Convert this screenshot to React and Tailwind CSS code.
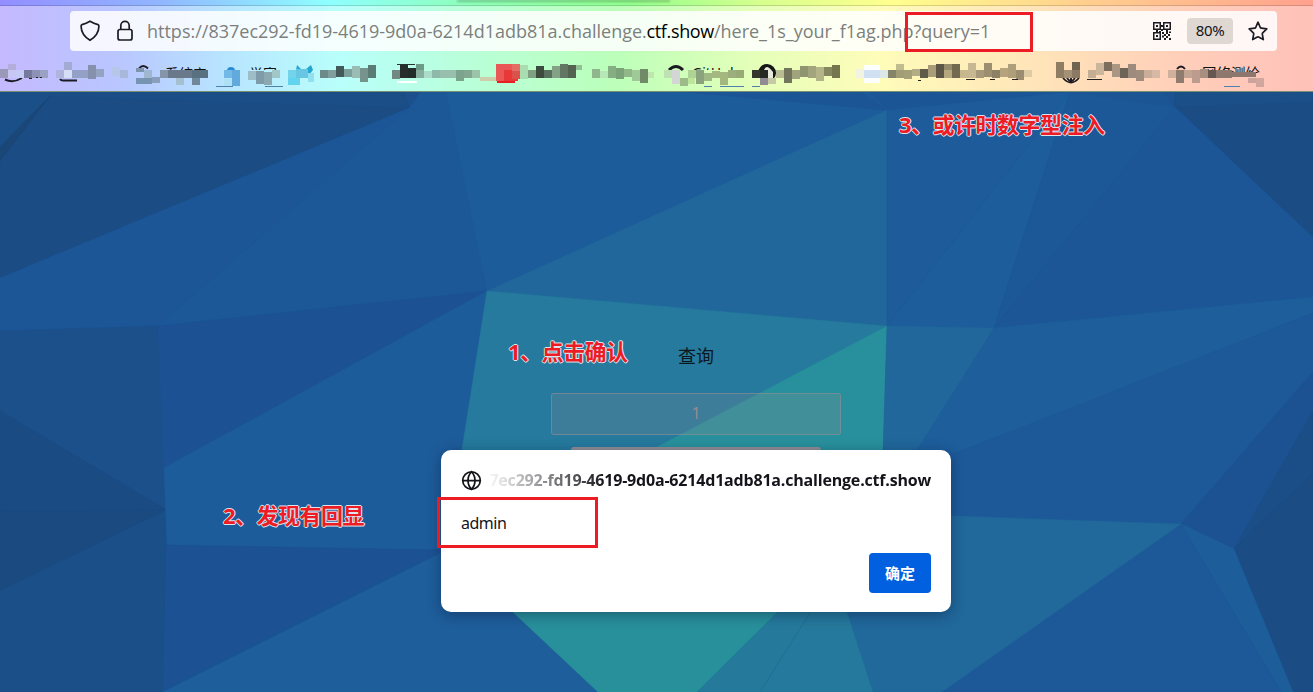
import React from "react";
import { Globe } from "lucide-react";

const FACETS = [
  ["0,92 404,92 409,108 0,278", "#1b4c83"],
  ["0,92 50,92 50,96 0,148", "#1b4f88"],
  ["50,96 0,147 0,161", "#1b4778"],
  ["50,92 404,92 409,108 50,96", "#1b4e86"],
  ["404,92 421,92 409,108", "#1c4f8b"],
  ["0,278 409,108 158,326 0,331", "#1c5697"],
  ["409,108 421,92 446,92 487,291 158,326", "#1c5898"],
  ["446,92 687,92 887,110 487,291", "#1d5c9a"],
  ["687,92 1070,92 887,110", "#1c5596"],
  ["862,92 870,92 887,110", "#1d5998"],
  ["487,291 887,110 887,326", "#21679b"],
  ["0,331 158,326 167,510 0,411", "#1c508b"],
  ["0,411 167,510 0,511", "#1b4b83"],
  ["0,511 167,510 0,591", "#1b4a81"],
  ["0,591 167,510 163,692 0,692", "#1b4f88"],
  ["158,326 487,291 164,468", "#1c5294"],
  ["164,468 487,291 462,450 441,550 167,545", "#1d5c9a"],
  ["167,545 441,550 441,553 163,692", "#1c5293"],
  ["163,692 441,553 512,612 598,692", "#1e5e9b"],
  ["487,291 887,326 640,456 461,456", "#257a9d"],
  ["887,326 883,460 632,460", "#28909c"],
  ["887,110 1070,92 887,326", "#1d5b9a"],
  ["887,326 1070,92 994,328", "#1d5d9b"],
  ["1070,92 1175,107 994,328", "#1c5898"],
  ["1070,92 1164,92 1175,107", "#1c5594"],
  ["1164,92 1176,92 1175,107", "#1c528f"],
  ["1176,92 1313,92 1313,237 1175,107", "#1b4c84"],
  ["1176,92 1313,92 1313,102 1175,107", "#1b4f88"],
  ["1175,107 1313,238 1313,297 994,328", "#1c5697"],
  ["887,326 994,328 917,452 883,452", "#21679b"],
  ["994,328 1313,297 1313,313 956,453 917,450", "#1d5e9b"],
  ["956,453 1313,313 1313,372 1181,524 940,516", "#1d5999"],
  ["1313,372 1313,411 1234,549 1181,524", "#1c5292"],
  ["1313,411 1313,473 1234,549", "#1b4e87"],
  ["1313,473 1313,692 1293,692 1234,549", "#1b4c84"],
  ["1181,524 1234,549 1293,692 1281,692", "#1d5d9a"],
  ["1181,524 1281,692 942,692", "#1d5899"],
  ["900,514 956,516 1181,524 942,692 873,692 840,590", "#21689b"],
  ["500,600 790,600 697,692 598,692", "#28909b"],
  ["790,600 818,600 760,692 697,692", "#257a9c"],
  ["818,600 843,600 873,692 760,692", "#25799c"],
];

// x, y, width, height, fill
const BLOCKS = [
  [0, 69, 8, 9, "#9a99b9"], [8, 64, 8, 7, "#b3add9"], [8, 70, 8, 8, "#c8c6f2"], [16, 70, 8, 8, "#c5c9f5"], [24, 70, 8, 8, "#77799c"], [32, 70, 8, 8, "#8d91b5"], [40, 70, 8, 8, "#9aa2c4"],
  [56, 70, 8, 8, "#afb4dc"], [64, 62, 8, 8, "#a3abd5"], [64, 70, 8, 8, "#d5def5"], [72, 70, 8, 8, "#93a0c8"], [80, 70, 8, 8, "#93a1c6"], [88, 65, 8, 14, "#8591ac"], [96, 69, 8, 8, "#94a3c1"], [112, 67, 8, 9, "#b5c6e9"], [120, 70, 8, 8, "#a8b8da"],
  [136, 68, 8, 4, "#7e93ad"], [144, 70, 8, 8, "#a0b7d2"], [136, 78, 16, 6, "#7794b3"], [152, 77, 8, 6, "#8b9ebb"], [160, 70, 8, 8, "#8495a9"], [168, 70, 24, 8, "#69798a"], [176, 78, 8, 7, "#a4bfcf"], [192, 70, 16, 8, "#597080"], [192, 78, 8, 7, "#70889a"],
  [224, 70, 8, 8, "#72b9e8"], [232, 70, 8, 16, "#62aade"], [224, 79, 8, 7, "#aee1f4"], [248, 71, 8, 9, "#9dbdc7"], [256, 71, 8, 13, "#7f9aa8"], [264, 72, 8, 13, "#8ca9b1"], [272, 70, 8, 8, "#a1c6c7"],
  [288, 70, 8, 8, "#72d4eb"], [288, 78, 12, 7, "#62d4ed"], [296, 69, 12, 9, "#67c6e2"], [308, 73, 6, 9, "#90e0ef"], [320, 70, 8, 8, "#6b8a89"], [328, 70, 8, 8, "#829d9d"], [336, 66, 8, 11, "#43595a"], [344, 69, 8, 8, "#7ca09c"], [352, 66, 8, 12, "#9abcb5"], [360, 68, 8, 14, "#76948b"], [368, 65, 8, 13, "#5b7b75"],
  [392, 70, 8, 9, "#718883"], [400, 64, 8, 14, "#272e2c"], [408, 68, 8, 10, "#222c29"], [416, 64, 8, 7, "#6c9b88"], [416, 70, 8, 8, "#87afa0"], [424, 71, 8, 7, "#acddcb"], [432, 70, 8, 8, "#8eb8aa"], [440, 70, 16, 8, "#98bead"], [456, 70, 8, 11, "#7ca38b"], [464, 70, 8, 8, "#83a790"], [472, 70, 8, 8, "#9bc4a9"],
  [480, 77, 16, 4, "#ceceac"], [496, 64, 8, 17, "#e95757"], [504, 64, 8, 14, "#eb5656"], [504, 70, 14, 11, "#e83838"], [512, 64, 8, 7, "#e56b66"], [512, 71, 8, 8, "#dd514c"], [520, 65, 8, 14, "#a9dcae"], [528, 70, 8, 8, "#7f9f83"], [536, 66, 8, 12, "#3d4b3e"], [544, 70, 8, 8, "#58705d"], [552, 66, 8, 12, "#83a286"], [560, 64, 8, 14, "#627763"], [568, 65, 8, 13, "#53634f"], [576, 65, 6, 5, "#93c196"],
  [592, 69, 8, 9, "#90b68e"], [600, 71, 8, 7, "#b7e7b4"], [608, 66, 8, 12, "#85ae83"], [616, 68, 8, 11, "#7ba278"], [624, 69, 8, 8, "#91b789"], [632, 70, 8, 11, "#a0c998"], [640, 69, 8, 14, "#718a67"], [648, 72, 6, 6, "#bee6ae"],
  [664, 70, 8, 8, "#bfe0b2"], [672, 70, 8, 14, "#d4d5d5"], [680, 78, 8, 8, "#9bbc89"], [688, 78, 7, 6, "#bee59c"], [688, 70, 8, 8, "#aed394"], [696, 70, 8, 14, "#8ba37c"], [704, 73, 8, 8, "#9fb884"], [712, 71, 8, 7, "#a4b982"], [720, 72, 8, 13, "#a3b77e"], [728, 70, 8, 8, "#9cae7c"], [736, 70, 8, 8, "#98aa76"],
  [752, 70, 8, 8, "#34382c"], [760, 70, 8, 8, "#252823"], [760, 78, 8, 7, "#918b93"], [768, 78, 8, 6, "#c6c8a6"], [776, 70, 8, 8, "#babd92"], [784, 68, 8, 15, "#73765c"], [792, 70, 8, 9, "#a1a37c"], [800, 66, 8, 11, "#919470"], [808, 66, 8, 12, "#a2a47b"], [816, 67, 8, 14, "#b3b588"], [824, 67, 8, 9, "#86875f"], [832, 65, 8, 13, "#75754e"],
  [856, 69, 8, 9, "#f2f3e3"], [864, 65, 16, 18, "#fdffff"], [864, 70, 16, 8, "#cfe1f2"], [880, 70, 8, 8, "#dce8e7"], [888, 70, 8, 8, "#858468"], [896, 64, 8, 14, "#c1bc8f"], [896, 70, 8, 8, "#a29d76"], [904, 70, 8, 9, "#a5a078"], [912, 69, 8, 7, "#b4ac84"], [920, 69, 8, 9, "#5f5b48"], [928, 65, 8, 12, "#a89d76"], [936, 64, 8, 14, "#5b5645"], [944, 64, 8, 6, "#968c6b"], [944, 70, 8, 8, "#b5a87f"], [952, 64, 8, 14, "#73694f"], [960, 70, 8, 8, "#c6b78d"], [968, 63, 8, 15, "#c7b891"], [976, 70, 8, 8, "#a7987a"], [984, 63, 8, 14, "#9b8f70"], [992, 70, 8, 8, "#8e8064"], [1000, 68, 8, 9, "#b6a37e"], [1008, 64, 8, 14, "#ae9e7a"], [1016, 70, 8, 10, "#9c8c70"], [1024, 70, 8, 7, "#decba3"],
  [1056, 62, 8, 16, "#8e7d63"], [1064, 70, 8, 8, "#a49074"], [1072, 62, 8, 8, "#716352"], [1072, 70, 8, 8, "#8b7963"], [1088, 70, 8, 8, "#c4ad93"], [1096, 63, 8, 12, "#cbb69c"], [1104, 62, 8, 9, "#7c6e5e"], [1112, 64, 8, 13, "#a99783"], [1120, 68, 8, 10, "#6d6458"], [1128, 64, 8, 14, "#9d8b7d"], [1136, 70, 8, 11, "#a18d7d"], [1144, 70, 8, 8, "#c8ad98"], [1152, 70, 8, 8, "#d5b9a4"],
  [1168, 70, 8, 8, "#cfb09c"], [1176, 70, 8, 13, "#907c6e"], [1184, 70, 8, 8, "#c3a392"], [1192, 70, 8, 13, "#bb9c8e"], [1200, 69, 8, 9, "#a88e7f"], [1208, 70, 8, 8, "#665751"], [1216, 70, 16, 8, "#8e786e"], [1232, 72, 24, 5, "#8d766d"], [1248, 78, 8, 5, "#cba59b"], [1256, 78, 8, 9, "#d1a69d"],
];

function Bookmarks() {
  return (
    <svg width="1313" height="36" viewBox="0 56 1313 36" className="block shrink-0" shapeRendering="crispEdges">
      <defs>
        <clipPath id="labelTops"><rect x="0" y="60" width="1195" height="10" /><rect x="1195" y="60" width="100" height="13" /></clipPath>
      </defs>
      <g fill="none" stroke="#1c1b22" strokeWidth="2" shapeRendering="auto">
        <path d="M5 79.500q8 4 17-1.500" />
        <path d="M60 79q1 1.500 3 1.500h14" />
        <path d="M139 68.500q4-5 9 0" />
        <path d="M669 70q7-7 14 0" strokeWidth="3" />
        <path d="M1063 78q8 9 16 0M1067 78q4 6 8 0M1071 78v4" strokeWidth="1.800" />
        <path d="M1177 69q4-5 8 0" />
      </g>
      <g clipPath="url(#labelTops)" fill="#111" fontSize="14" fontFamily="'Noto Sans','Noto Sans CJK SC',sans-serif" shapeRendering="auto">
        <text x="165" y="79">系统安</text>
        <text x="249" y="79">学容</text>
        <text x="692" y="78">GitHub</text>
        <text x="1202" y="79" fontSize="14.500">网络测绘</text>
      </g>
      <circle cx="767" cy="73" r="9" fill="#161816" shapeRendering="auto" />
      <path d="M764 70q1-3 3-3t6 5v7h-6z" fill="#e8e9dc" shapeRendering="auto" />
      <circle cx="231" cy="71" r="4" fill="#2a8dd4" shapeRendering="auto" />
      <path d="M297 65l4 4h5l5-4 2 5-4 5h-9l-4-5z" fill="#22a7d2" shapeRendering="auto" />
      {BLOCKS.map(([x, y, w, h, c], i) => (
        <rect key={i} x={x} y={y} width={w} height={h} fill={c} />
      ))}
      <path d="M397 82h20" stroke="#fff" strokeWidth="2" />
      <path d="M397 64.500h18" stroke="#26342f" strokeWidth="1" />
      <path d="M497 82h18" stroke="#e81f25" strokeWidth="2" />
      <path d="M29 78.500h3M36 77.500h2M40 77.500h2M918 80.500h3M966 79.500h9M990 79.500h5M1012 79.500h6M1087 79.500h15" stroke="#222" strokeWidth="1" />
      <path d="M216 86.500h17M265 86.500h18M704 86.500h8M720 86.500h24M752 86.500h8M1224 86.500h16" stroke="#4f82ad" strokeWidth="1" />
    </svg>
  );
}

function ShieldIcon() {
  return (
    <svg width="20" height="22" viewBox="0 0 20 22" fill="none" stroke="#1c1b22" strokeWidth="1.700" strokeLinejoin="round">
      <path d="M10 1.200Q14 3.600 18 4.600Q19 4.900 18.900 6.500Q18.700 15 10 20.300Q1.300 15 1.100 6.500Q1 4.900 2 4.600Q6 3.600 10 1.200Z" />
    </svg>
  );
}

function LockIcon() {
  return (
    <svg width="18" height="22" viewBox="0 0 18 22" fill="none" stroke="#1c1b22" strokeWidth="1.700">
      <rect x="2" y="9.500" width="14" height="10.500" rx="2" />
      <path d="M4.800 9.500V5.500a4.200 4.200 0 0 1 8.400 0V9.500" />
    </svg>
  );
}

function QrIcon() {
  return (
    <svg width="18" height="18" viewBox="0 0 18 18" fill="none" stroke="#1c1b22" strokeWidth="1.500">
      <path d="M.75.75h6.500v6.500H.75zM10.750.75h6.500v6.500h-6.500zM.75 10.750h6.500v6.500H.75z" />
      <path d="M3 3h2v2H3zM13 3h2v2h-2zM3 13h2v2H3zM8 3h2v2H8zM3 8h2v2H3zM8 7h2v2H8zM6 9h2v1.500H6zM13 8h2v2h-2zM9 10h2v2H9zM16 9.500h2v1.500h-2zM11 12h2v2h-2zM15 12h2v2h-2zM9 13.500h2v2H9zM13 14h2v2h-2zM11 16h2v2h-2zM16 16h2v2h-2zM13 10h2v2h-2z" fill="#1c1b22" stroke="none" />
    </svg>
  );
}

function StarIcon() {
  return (
    <svg width="20" height="20" viewBox="0 0 20 20" fill="none" stroke="#1c1b22" strokeWidth="1.700" strokeLinejoin="round">
      <path d="M10 1.200l2.300 5.300q.3.600 1 .7l5.500.7-4.100 4q-.5.500-.4 1.200l1 5.500-4.700-2.500q-.6-.3-1.200 0l-4.700 2.500 1-5.500q.1-.7-.4-1.200l-4.100-4 5.500-.7q.7-.1 1-.7z" />
    </svg>
  );
}

const NOTE =
  "absolute whitespace-nowrap text-[22px] leading-[30px] font-bold tracking-[-0.500px] text-[#ed1c24] font-['Noto_Sans','Noto_Sans_CJK_SC',sans-serif] [text-shadow:1px_0_0_#dfe3ee,-1px_0_0_#dfe3ee,0_1px_0_#dfe3ee,0_-1px_0_#dfe3ee]";

export default function App() {
  return (
    <div className="relative flex h-[692px] w-[1313px] flex-col overflow-hidden font-['Noto_Sans','Noto_Sans_CJK_SC',sans-serif]">
      <header className="flex h-[92px] shrink-0 flex-col border-b border-[#78906f] bg-[linear-gradient(90deg,#c5b9ff_0%,#b9c6ff_9%,#b8e4ff_17%,#b9fffb_26%,#b9ffd8_36%,#bcffba_47%,#e3ffb9_57%,#fffcb9_67%,#ffe2b9_80%,#ffcdb9_91%,#ffc1b9_100%)]">
        <div className="flex h-[6px] shrink-0 justify-start border-b border-black/15 bg-[linear-gradient(90deg,#938eff_0%,#91b5ff_12%,#8effff_25%,#8effb8_36%,#92ff8e_48%,#d7ff8e_58%,#ffff8e_68%,#ffd18e_82%,#ffa18e_100%)]">
          <div className="ml-[457px] h-[2px] w-[213px] bg-black/25 blur-[1px]" />
        </div>
        <div className="ml-[70px] mt-[5px] flex h-10 w-[1207px] shrink-0 items-center rounded-[4px] bg-white/85">
          <span className="ml-[10px]"><ShieldIcon /></span>
          <span className="ml-4"><LockIcon /></span>
          <div className="ml-[13px] flex h-10 w-[1006px] items-center whitespace-pre text-[18px] text-[#7c7f7e] font-['Open_Sans',sans-serif]">
            <span className="w-[499.500px]">https://837ec292-fd19-4619-9d0a-6214d1adb81a.challenge.</span>
            <span className="w-[67.500px] tracking-[-0.350px] text-black">ctf.show</span>
            <span className="tracking-[-0.020px]">/here_1s_your_f1ag.php?query=1</span>
          </div>
          <QrIcon />
          <span className="ml-4 flex h-[26px] w-[46px] items-center justify-center rounded-[4px] bg-[#ded7d2] pb-px text-[15px] text-[#15141a] tracking-[-0.400px]">80%</span>
          <span className="ml-[15px]"><StarIcon /></span>
        </div>
        <div className="mt-[5px] h-[35px] overflow-hidden"><Bookmarks /></div>
      </header>
      <main className="relative flex h-[600px] flex-col items-center">
        <svg width="1313" height="600" viewBox="0 92 1313 600" className="absolute inset-0 bg-[#1d5a99]">
          {FACETS.map(([points, fill], i) => (
            <polygon key={i} points={points} fill={fill} stroke={fill} strokeWidth="0.500" />
          ))}
          <path d="M818 600L760 692" stroke="#246f94" strokeWidth="1" />
        </svg>
        <section className="relative flex w-full flex-col items-center pl-[79px] pt-[248px]">
          <h1 className="text-[18px] leading-8 text-[#0c1720]">查询</h1>
          <div className="mt-[21px] flex h-[42px] w-[290px] items-center justify-center rounded-[3px] border border-[#a08e92]/50 bg-[#a08e92]/20 pb-[3px] text-[16px] text-[#9a8d94] font-['Open_Sans',sans-serif]">1</div>
          <div className="mt-3 h-10 w-[250px] rounded-[3px] bg-[#918d95]" />
        </section>
      </main>
      <section className="absolute left-[441px] top-[450px] flex h-[162px] w-[510px] flex-col rounded-[10px] bg-white px-5 shadow-[0_3px_14px_rgba(8,20,50,0.4)]">
        <div className="mt-[18px] flex h-6 items-center">
          <Globe size={21} strokeWidth={2} color="#15141a" />
          <div className="ml-[4px] flex h-6 flex-1 items-center justify-end overflow-hidden whitespace-nowrap text-[16px] font-bold tracking-[-0.190px] text-[#15141a] font-['Open_Sans',sans-serif] [mask-image:linear-gradient(90deg,transparent_0,black_120px)]">7ec292-fd19-4619-9d0a-6214d1adb81a.challenge.ctf.show</div>
        </div>
        <p className="mt-[19px] text-[16px] leading-6 tracking-[-0.500px] text-[#15141a]">admin</p>
        <button className="mt-[18px] flex h-10 w-[62px] shrink-0 items-center justify-center self-end rounded-[4px] bg-[#0060df] text-[15px] font-bold text-white">确定</button>
      </section>
      <div className="absolute left-[905px] top-3 h-10 w-32 border-[3px] border-[#ed1c24]" />
      <div className="absolute left-[437px] top-[497px] h-[51px] w-[161px] border-[3px] border-[#ed1c24]" />
      <div className={NOTE + " left-[899px] top-[109px]"}>3、或许时数字型注入</div>
      <div className={NOTE + " left-[508px] top-[336px]"}>1、点击确认</div>
      <div className={NOTE + " left-[223px] top-[500px]"}>2、发现有回显</div>
    </div>
  );
}
